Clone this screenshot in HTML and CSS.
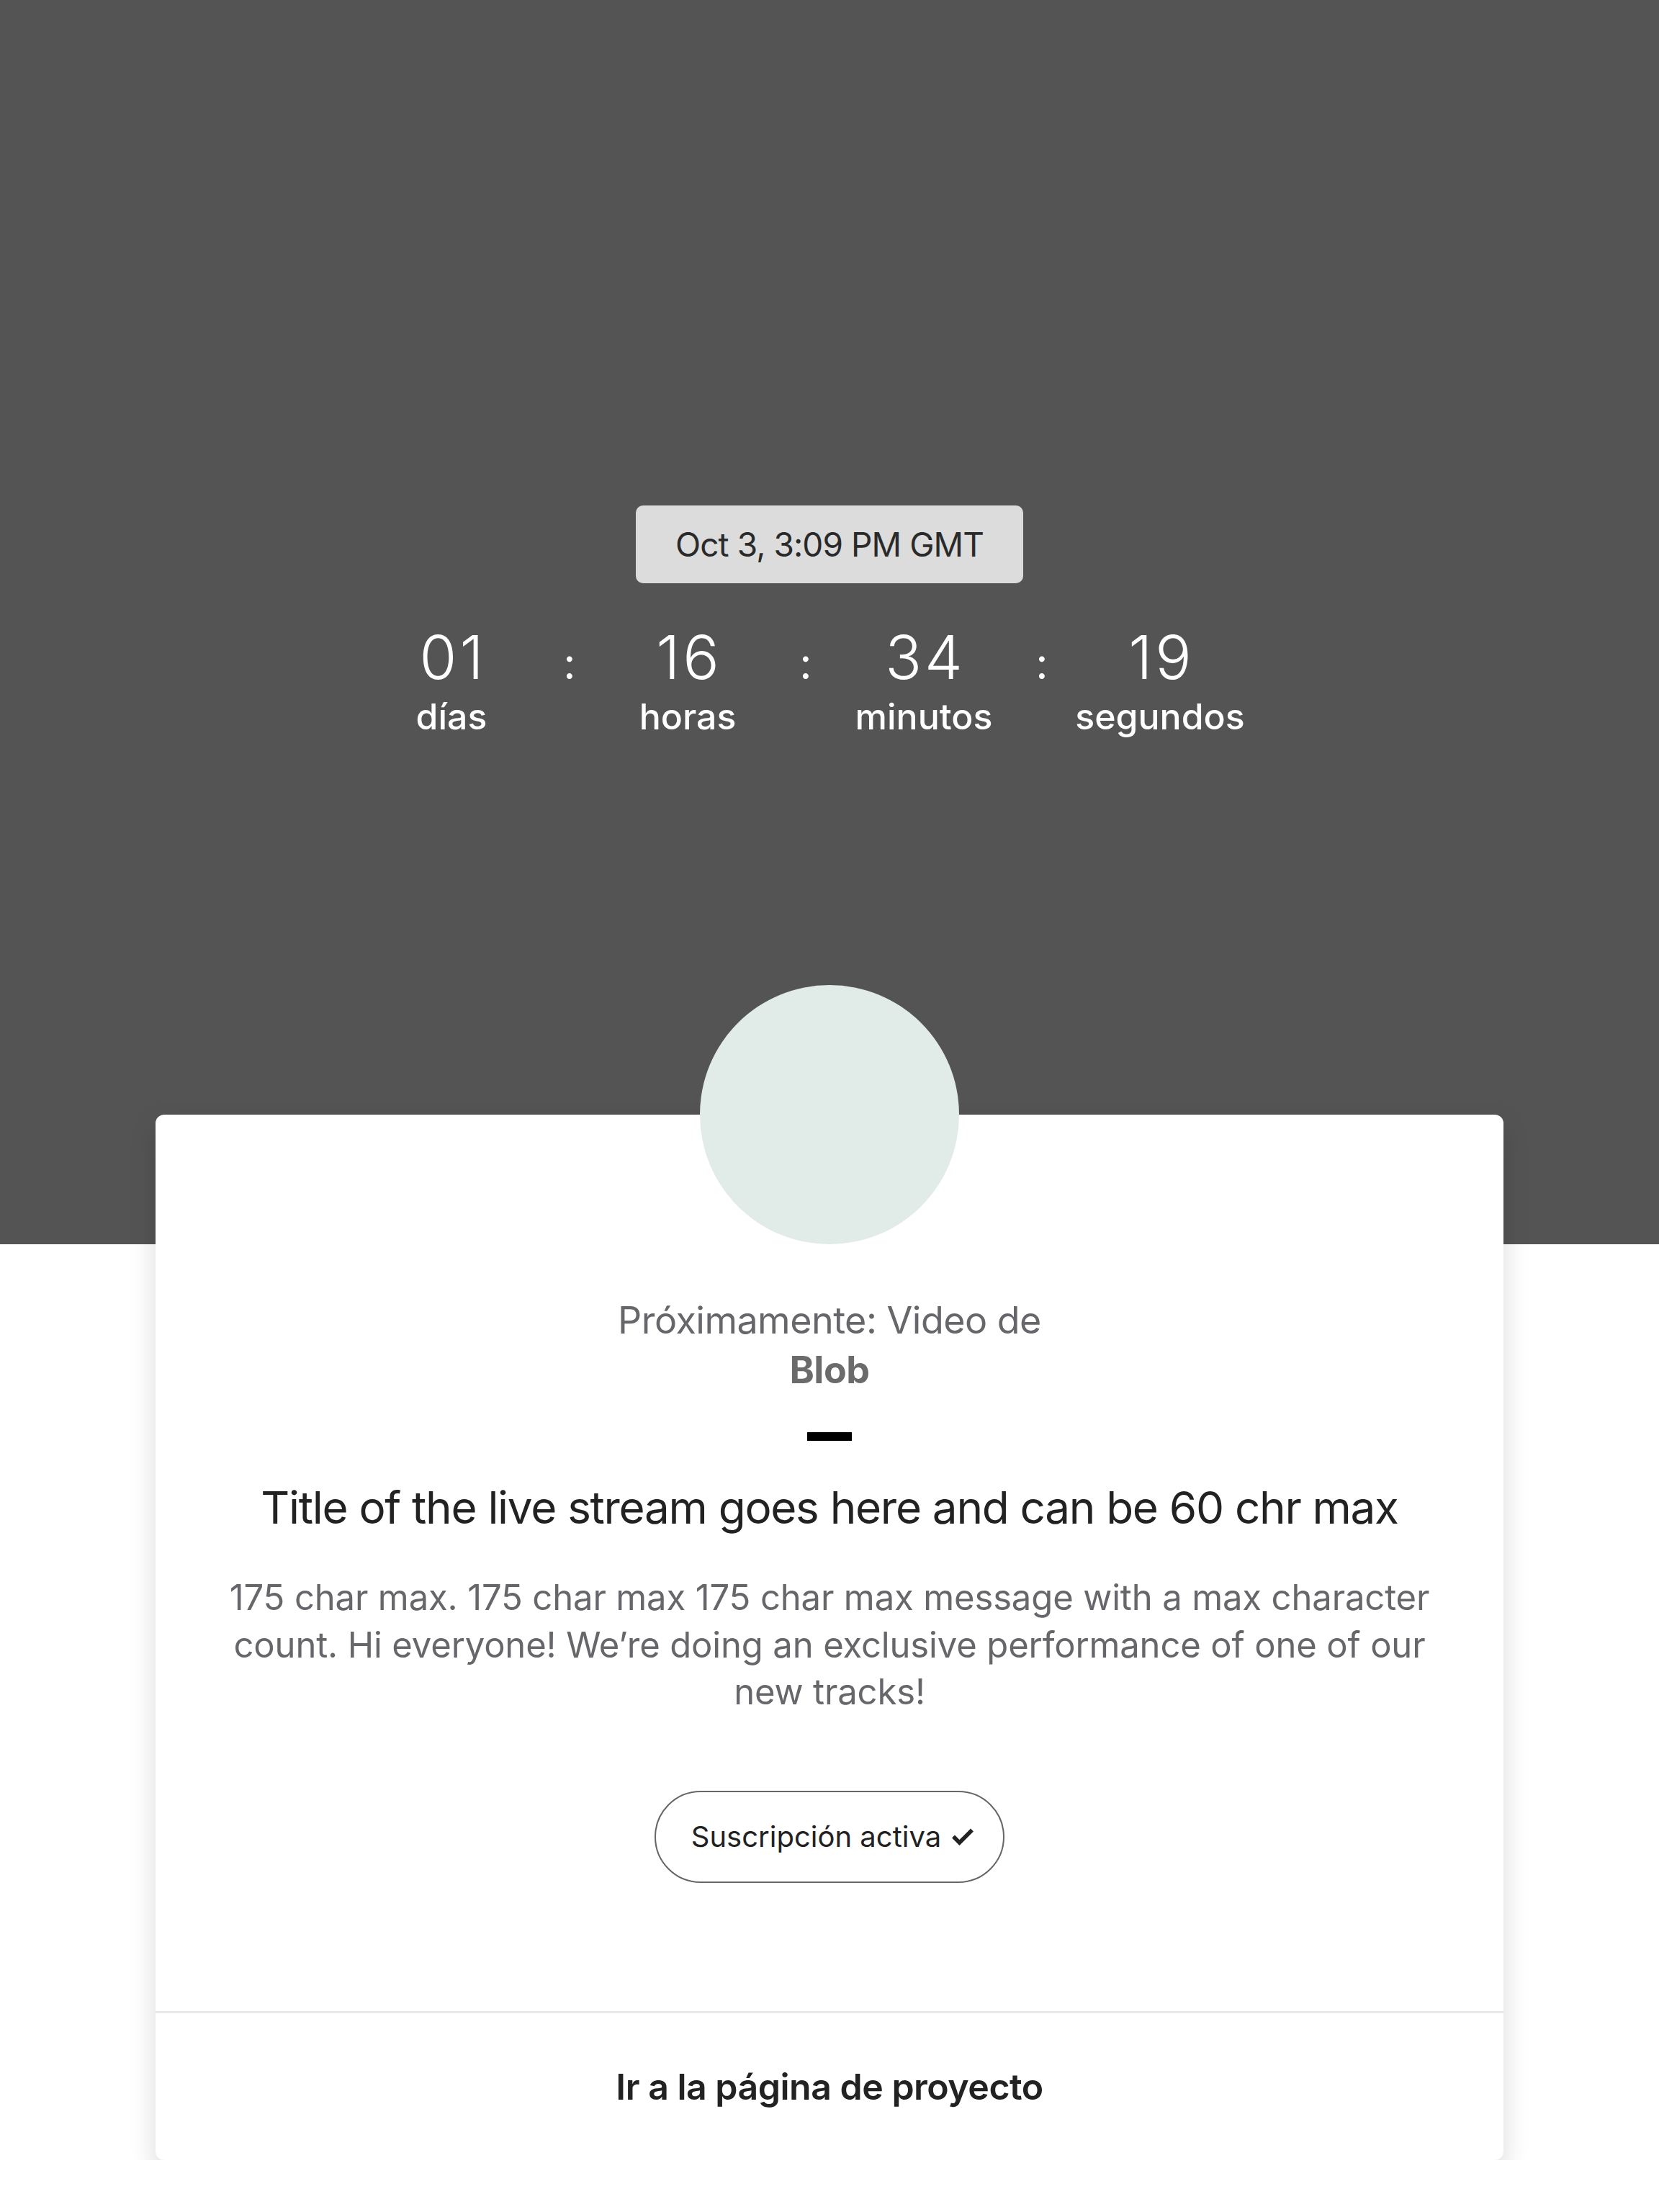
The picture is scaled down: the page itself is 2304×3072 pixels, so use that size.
FILE: index.html
```html
<!DOCTYPE html>
<html lang="es">
<head>
<meta charset="utf-8">
<title>Próximamente</title>
<link rel="stylesheet" href="styles.css">
</head>
<body>
<header class="hero">
  <div class="date-pill">Oct 3, 3:09 PM GMT</div>
  <div class="countdown">
    <div class="unit"><span class="num">01</span><span class="label">días</span></div>
    <span class="sep">:</span>
    <div class="unit"><span class="num">16</span><span class="label">horas</span></div>
    <span class="sep">:</span>
    <div class="unit"><span class="num">34</span><span class="label">minutos</span></div>
    <span class="sep">:</span>
    <div class="unit"><span class="num">19</span><span class="label">segundos</span></div>
  </div>
</header>
<main class="card">
  <div class="avatar"></div>
  <div class="card-body">
    <p class="kicker">Próximamente: Video de<br><strong>Blob</strong></p>
    <div class="dash"></div>
    <h1 class="title">Title of the live stream goes here and can be 60 chr max</h1>
    <p class="desc">175 char max. 175 char max 175 char max message with a max character count. Hi everyone! We’re doing an exclusive performance of one of our new tracks!</p>
    <button class="sub-btn" type="button">Suscripción activa<svg class="check" viewBox="0 0 32 25" width="32" height="25" aria-hidden="true"><polyline points="3,12.5 11.5,21 29,3.5" fill="none" stroke="#222" stroke-width="5.5" stroke-linejoin="miter" stroke-linecap="butt"/></svg></button>
  </div>
  <a class="card-footer" href="#">Ir a la página de proyecto</a>
</main>
</body>
</html>
```
FILE: styles.css
```css
html, body {
  margin: 0;
  padding: 0;
  background: #ffffff;
  font-family: Inter, "Noto Sans", "Liberation Sans", sans-serif;
}

.hero {
  background: #545454;
  height: 1728px;
  box-sizing: border-box;
  padding-top: 702px;
  display: flex;
  flex-direction: column;
  align-items: center;
}

.date-pill {
  background: #dcdcdc;
  color: #2a2a2a;
  font-size: 46px;
  letter-spacing: -0.02em;
  height: 108px;
  line-height: 108px;
  padding: 0 55px;
  border-radius: 10px;
}

.countdown {
  display: flex;
  align-items: baseline;
  margin-top: 61px;
  padding-right: 66px;
  color: #ffffff;
}

.unit {
  width: 220px;
  display: flex;
  flex-direction: column;
  align-items: center;
}

.num {
  font-size: 84px;
  font-weight: 300;
  line-height: 84px;
  letter-spacing: 4px;
  padding-left: 4px;
}

.label {
  font-size: 50px;
  font-weight: 500;
  line-height: 50px;
  margin-top: 15px;
}

.sep {
  width: 108px;
  text-align: center;
  font-size: 60px;
  font-weight: 400;
}

.card {
  display: flex;
  flex-direction: column;
  position: relative;
  margin: -180px 216px 0;
  background: #ffffff;
  border-radius: 12px;
  box-shadow: 0 16px 36px rgba(0, 0, 0, 0.15);
}

.avatar {
  align-self: center;
  width: 360px;
  height: 360px;
  border-radius: 50%;
  background: #e1ebe7;
  margin-top: -180px;
}

.card-body {
  display: flex;
  flex-direction: column;
  align-items: center;
  text-align: center;
  padding: 71px 60px 178px;
}

.kicker {
  font-size: 52px;
  letter-spacing: -0.01em;
  line-height: 69px;
  color: #66666b;
  margin: 0;
}

.kicker strong {
  font-weight: 700;
  color: #6b6b6b;
}

.dash {
  width: 62px;
  height: 12px;
  background: #000000;
  margin-top: 52px;
}

.title {
  font-size: 62px;
  font-weight: 400;
  letter-spacing: -0.021em;
  line-height: 74px;
  color: #222222;
  margin: 56px 0 0;
}

.desc {
  font-size: 49px;
  letter-spacing: -0.003em;
  line-height: 65.5px;
  color: #66666b;
  margin: 55px 0 0;
  max-width: 1700px;
}

.sub-btn {
  margin-top: 104px;
  height: 128px;
  box-sizing: border-box;
  border: 2px solid #66666b;
  border-radius: 64px;
  padding: 0 40px 0 49px;
  background: #ffffff;
  display: flex;
  align-items: center;
  gap: 14px;
  font-family: Inter, "Noto Sans", "Liberation Sans", sans-serif;
  font-size: 40px;
  font-weight: 400;
  color: #222222;
}

.check {
  display: block;
  flex: none;
}

.card-footer {
  display: flex;
  align-items: center;
  justify-content: center;
  height: 204px;
  border-top: 3px solid #e9e9e9;
  font-size: 50px;
  font-weight: 600;
  letter-spacing: -0.01em;
  color: #222222;
  text-decoration: none;
}
```
